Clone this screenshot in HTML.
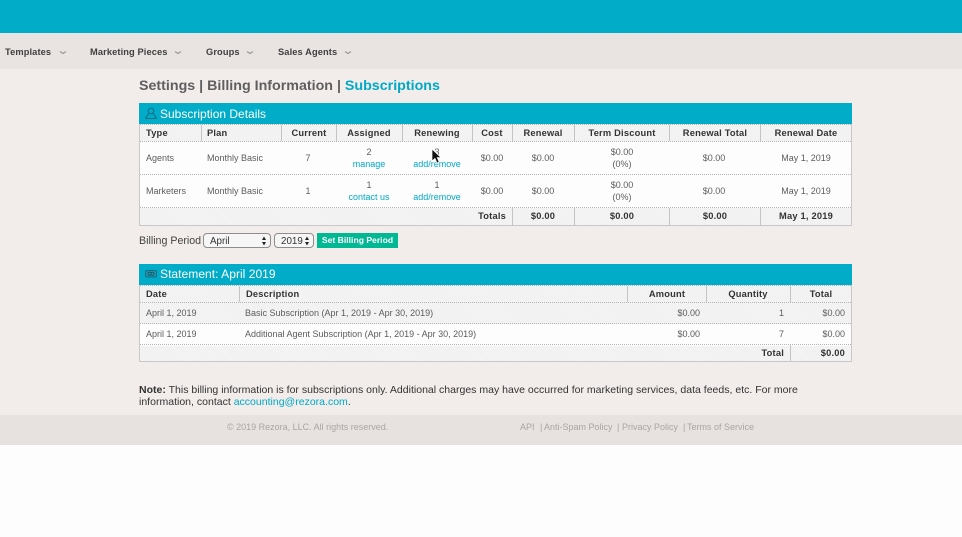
<!DOCTYPE html>
<html><head><meta charset="utf-8"><title>Subscriptions</title>
<style>
html,body{margin:0;padding:0;width:962px;height:537px;overflow:hidden;background:#fdfdfd}
body{position:relative;font-family:"Liberation Sans",sans-serif;color:#555}
div,a,span.t{position:absolute;box-sizing:border-box}
.t{white-space:nowrap;font-size:9px;line-height:12px;color:#5c5c5c}
.c{transform:translateX(-50%)}
.r{transform:translateX(-100%)}
.b{font-weight:bold;color:#333;font-size:9.3px;letter-spacing:.2px}
.l{color:#00a9c6}
.nav{font-size:9.3px;font-weight:bold;color:#3f3f3f;letter-spacing:.1px}
.hat{background-color:#f5f5f5;background-image:repeating-linear-gradient(45deg,rgba(0,0,0,.022) 0 1px,transparent 1px 2px)}
.dot{height:1px;background:repeating-linear-gradient(90deg,#b5b5b5 0 1px,transparent 1px 2px)}
.v{width:1px;background:#c4c4c4}
.sel{border:1px solid #8d8d8d;border-radius:4px;background:#f6f6f6;height:15px;top:233px;font-size:9.8px;line-height:13px;padding-top:1px;color:#333;padding-left:6px}
</style></head><body>
<div style="left:0;top:0;width:962px;height:33px;background:#00acc8"></div>
<div style="left:0;top:33px;width:962px;height:412px;background:#f2edeb"></div>
<div style="left:0;top:33px;width:962px;height:36px;background:#e9e4e2"></div>
<div style="left:0;top:415px;width:962px;height:30px;background:#e7e2e0"></div>

<span class="t nav" style="left:5px;top:46px">Templates</span>
<span class="t nav" style="left:90px;top:46px">Marketing Pieces</span>
<span class="t nav" style="left:206px;top:46px">Groups</span>
<span class="t nav" style="left:278px;top:46px">Sales Agents</span>
<svg style="position:absolute;left:0;top:48px" width="360" height="10" fill="none" stroke="#9a9a9a" stroke-width="1.2"><path d="M60 3.500l3 2 3-2M175 3.500l3 2 3-2M247 3.500l3 2 3-2M345 3.500l3 2 3-2"/></svg>

<span class="t" style="left:139px;top:78px;font-size:14.26px;line-height:17px;font-weight:bold;color:#5f5f5f">Settings | Billing Information | <span style="color:#00a9c6">Subscriptions</span></span>

<!-- Subscription table -->
<div style="left:139px;top:103px;width:713px;height:123px;border:1px solid #c8c8c8;border-top:0;background:#fdfdfd"></div>
<div style="left:139px;top:103px;width:713px;height:21px;background:#00acc8"></div>
<div class="hat" style="left:140px;top:124px;width:711px;height:17px"></div>
<div class="hat" style="left:140px;top:208px;width:711px;height:17px"></div>
<div class="dot" style="left:140px;top:124px;width:711px"></div>
<div class="dot" style="left:140px;top:141px;width:711px"></div>
<div class="dot" style="left:140px;top:174px;width:711px"></div>
<div class="dot" style="left:140px;top:207px;width:711px"></div>
<div class="v" style="left:201px;top:125px;height:16px"></div>
<div class="v" style="left:281px;top:125px;height:16px"></div>
<div class="v" style="left:336px;top:125px;height:16px"></div>
<div class="v" style="left:402px;top:125px;height:16px"></div>
<div class="v" style="left:472px;top:125px;height:16px"></div>
<div class="v" style="left:512px;top:125px;height:16px"></div>
<div class="v" style="left:574px;top:125px;height:16px"></div>
<div class="v" style="left:669px;top:125px;height:16px"></div>
<div class="v" style="left:760px;top:125px;height:16px"></div>
<div class="v" style="left:512px;top:208px;height:17px"></div>
<div class="v" style="left:574px;top:208px;height:17px"></div>
<div class="v" style="left:669px;top:208px;height:17px"></div>
<div class="v" style="left:760px;top:208px;height:17px"></div>
<svg style="position:absolute;left:145px;top:107px" width="12" height="13" fill="none" stroke="#0b6f86" stroke-width="1.1"><circle cx="6" cy="4" r="2.800"/><path d="M3.800 6.300C3.500 8 1.200 8.500.8 11.500h10.400C10.800 8.500 8.500 8 8.200 6.300"/></svg>
<span class="t" style="left:160px;top:107px;font-size:12px;line-height:15px;color:#fff">Subscription Details</span>

<span class="t b" style="left:146px;top:127px">Type</span>
<span class="t b" style="left:207px;top:127px">Plan</span>
<span class="t b c" style="left:309px;top:127px">Current</span>
<span class="t b c" style="left:369px;top:127px">Assigned</span>
<span class="t b c" style="left:437px;top:127px">Renewing</span>
<span class="t b c" style="left:492px;top:127px">Cost</span>
<span class="t b c" style="left:543px;top:127px">Renewal</span>
<span class="t b c" style="left:622px;top:127px">Term Discount</span>
<span class="t b c" style="left:715px;top:127px">Renewal Total</span>
<span class="t b c" style="left:806px;top:127px">Renewal Date</span>

<span class="t" style="left:146px;top:152px">Agents</span>
<span class="t" style="left:207px;top:152px">Monthly Basic</span>
<span class="t c" style="left:308px;top:152px">7</span>
<span class="t c" style="left:369px;top:146px">2</span>
<a class="t c l" style="left:369px;top:158px">manage</a>
<span class="t c" style="left:437px;top:146px">3</span>
<a class="t c l" style="left:437px;top:158px">add/remove</a>
<span class="t c" style="left:492px;top:152px">$0.00</span>
<span class="t c" style="left:543px;top:152px">$0.00</span>
<span class="t c" style="left:622px;top:146px">$0.00</span>
<span class="t c" style="left:622px;top:158px">(0%)</span>
<span class="t c" style="left:714px;top:152px">$0.00</span>
<span class="t c" style="left:806px;top:152px">May 1, 2019</span>

<span class="t" style="left:146px;top:185px">Marketers</span>
<span class="t" style="left:207px;top:185px">Monthly Basic</span>
<span class="t c" style="left:308px;top:185px">1</span>
<span class="t c" style="left:369px;top:179px">1</span>
<a class="t c l" style="left:369px;top:191px">contact us</a>
<span class="t c" style="left:437px;top:179px">1</span>
<a class="t c l" style="left:437px;top:191px">add/remove</a>
<span class="t c" style="left:492px;top:185px">$0.00</span>
<span class="t c" style="left:543px;top:185px">$0.00</span>
<span class="t c" style="left:622px;top:179px">$0.00</span>
<span class="t c" style="left:622px;top:191px">(0%)</span>
<span class="t c" style="left:714px;top:185px">$0.00</span>
<span class="t c" style="left:806px;top:185px">May 1, 2019</span>

<span class="t b r" style="left:506px;top:210px">Totals</span>
<span class="t b c" style="left:543px;top:210px">$0.00</span>
<span class="t b c" style="left:622px;top:210px">$0.00</span>
<span class="t b c" style="left:715px;top:210px">$0.00</span>
<span class="t b c" style="left:806px;top:210px">May 1, 2019</span>

<!-- cursor -->
<svg style="position:absolute;left:431px;top:148px" width="12" height="17"><path d="M1 1v12l3-2.600 2 4.600 2.200-1-2-4.400h3.800z" fill="#111" stroke="#fff" stroke-width=".7"/></svg>

<!-- Billing period -->
<span class="t" style="left:139px;top:235px;font-size:10.65px;color:#444">Billing Period</span>
<div class="sel" style="left:203px;width:68px">April</div>
<div class="sel" style="left:274px;width:40px">2019</div>
<svg style="position:absolute;left:262px;top:235px" width="50" height="12" fill="#222"><path d="M0 5l2-3.500 2 3.500zM0 7l2 3.500 2-3.500zM43 5l2-3.500 2 3.500zM43 7l2 3.500 2-3.500z"/></svg>
<div style="left:317px;top:233px;width:81px;height:15px;background:#00b893;color:#fff;font-size:8.6px;font-weight:bold;line-height:15px;text-align:center;white-space:nowrap">Set Billing Period</div>

<!-- Statement table -->
<div style="left:139px;top:264px;width:713px;height:98px;border:1px solid #c8c8c8;border-top:0;background:#fdfdfd"></div>
<div style="left:139px;top:264px;width:713px;height:21px;background:#00acc8"></div>
<div class="hat" style="left:140px;top:285px;width:711px;height:39px"></div>
<div class="hat" style="left:140px;top:346px;width:711px;height:15px"></div>
<div class="dot" style="left:140px;top:285px;width:711px"></div>
<div class="dot" style="left:140px;top:302px;width:711px"></div>
<div class="dot" style="left:140px;top:323px;width:711px"></div>
<div class="dot" style="left:140px;top:344px;width:711px"></div>
<div class="v" style="left:239px;top:286px;height:16px"></div>
<div class="v" style="left:627px;top:286px;height:16px"></div>
<div class="v" style="left:706px;top:286px;height:16px"></div>
<div class="v" style="left:790px;top:286px;height:16px"></div>
<div class="v" style="left:790px;top:345px;height:16px"></div>
<svg style="position:absolute;left:145px;top:270px" width="12" height="8" fill="none"><rect x=".5" y=".5" width="11" height="6.500" rx="1.500" fill="#2a93a9" stroke="#0b6f86"/><circle cx="4.500" cy="3.750" r="1.600" stroke="#0b5f73" stroke-width=".9"/><circle cx="7.500" cy="3.750" r="1.600" stroke="#0b5f73" stroke-width=".9"/></svg>
<span class="t" style="left:160px;top:267px;font-size:12.1px;line-height:15px;color:#fff">Statement: April 2019</span>

<span class="t b" style="left:146px;top:288px">Date</span>
<span class="t b" style="left:246px;top:288px">Description</span>
<span class="t b c" style="left:667px;top:288px">Amount</span>
<span class="t b c" style="left:748px;top:288px">Quantity</span>
<span class="t b c" style="left:821px;top:288px">Total</span>

<span class="t" style="left:146px;top:307px">April 1, 2019</span>
<span class="t" style="left:245px;top:307px">Basic Subscription (Apr 1, 2019 - Apr 30, 2019)</span>
<span class="t r" style="left:700px;top:307px">$0.00</span>
<span class="t r" style="left:784px;top:307px">1</span>
<span class="t r" style="left:845px;top:307px">$0.00</span>

<span class="t" style="left:146px;top:328px">April 1, 2019</span>
<span class="t" style="left:245px;top:328px">Additional Agent Subscription (Apr 1, 2019 - Apr 30, 2019)</span>
<span class="t r" style="left:700px;top:328px">$0.00</span>
<span class="t r" style="left:784px;top:328px">7</span>
<span class="t r" style="left:845px;top:328px">$0.00</span>

<span class="t b r" style="left:784px;top:347px">Total</span>
<span class="t b r" style="left:845px;top:347px">$0.00</span>

<!-- Note -->
<span class="t" style="left:139px;top:384px;font-size:10.52px;color:#333"><b>Note:</b> This billing information is for subscriptions only. Additional charges may have occurred for marketing services, data feeds, etc. For more</span>
<span class="t" style="left:139px;top:396px;font-size:10.52px;color:#333">information, contact <span style="color:#00a9c6">accounting@rezora.com</span>.</span>

<!-- Footer -->
<span class="t" style="left:227px;top:421px;color:#a9a5a4">© 2019 Rezora, LLC. All rights reserved.</span>
<span class="t" style="left:520px;top:421px;color:#a9a5a4">API</span>
<span class="t" style="left:540px;top:421px;color:#a9a5a4">|</span>
<span class="t" style="left:544px;top:421px;color:#a9a5a4">Anti-Spam Policy</span>
<span class="t" style="left:617px;top:421px;color:#a9a5a4">|</span>
<span class="t" style="left:622px;top:421px;color:#a9a5a4">Privacy Policy</span>
<span class="t" style="left:683px;top:421px;color:#a9a5a4">|</span>
<span class="t" style="left:687px;top:421px;color:#a9a5a4">Terms of Service</span>
</body></html>
